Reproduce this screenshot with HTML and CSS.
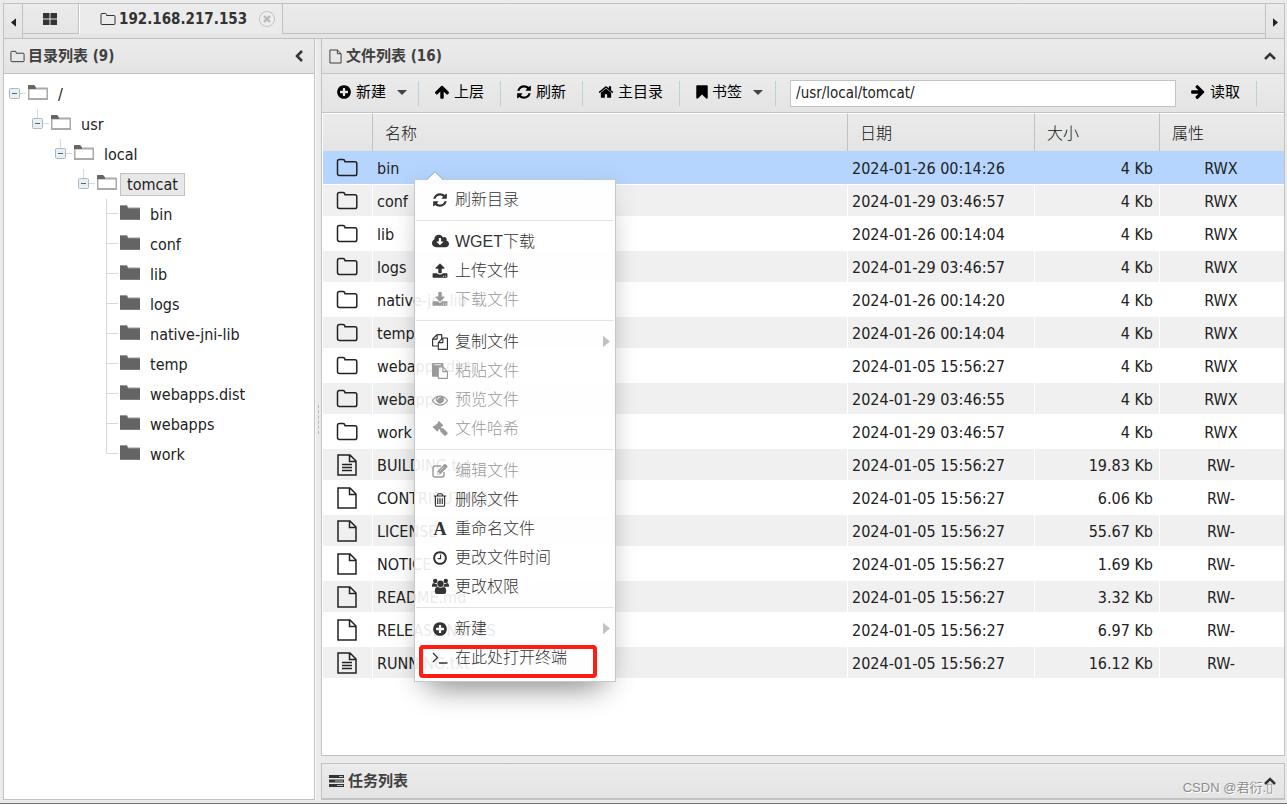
FILE: index.html
```html
<!DOCTYPE html>
<html lang="zh-CN">
<head>
<meta charset="utf-8">
<title>192.168.217.153</title>
<link rel="stylesheet" href="styles.css">
</head>
<body>
<svg class="sprite" aria-hidden="true">
  <symbol id="folder-o" viewBox="0 0 16 16"><path d="M1 3.5Q1 2.5 2 2.500H5.500Q6.500 2.500 6.500 3.500V4.500H14Q15 4.500 15 5.500V12.500Q15 13.500 14 13.500H2Q1 13.500 1 12.500Z" fill="none" stroke="currentColor"/></symbol>
  <symbol id="file-o" viewBox="0 0 14 16"><path d="M1 1H9L13 5V15H1ZM9 1V5H13" fill="none" stroke="currentColor"/></symbol>
  <symbol id="dir" viewBox="0 0 24 20"><path d="M2.500 3.500Q2.500 1.500 4.500 1.500H8Q9.800 1.500 10 3.800H20Q21.800 3.800 21.800 5.600V15.800Q21.800 17.600 20 17.600H4.500Q2.500 17.600 2.500 15.600Z" fill="none" stroke="currentColor" stroke-width="1.500"/></symbol>
  <symbol id="doc" viewBox="0 0 20 22"><path d="M1 1H13L19 7V21H1ZM12.500 1V7.500H19" fill="none" stroke="currentColor" stroke-width="1.500"/></symbol>
  <symbol id="doc-text" viewBox="0 0 20 22"><path d="M1 1H13L19 7V21H1ZM12.500 1V7.500H19M5 10.500H15M5 13.500H15M5 16.500H15" fill="none" stroke="currentColor" stroke-width="1.500"/></symbol>
  <symbol id="tree-open" viewBox="0 0 20 16"><path d="M0 1Q0 0 1 0H6L8 2.500H19Q20 2.500 20 3.500V15H0Z" fill="#aaa"/><path d="M0 1Q0 0 1 0H6L8 2.500V4H0Z" fill="#666"/><path d="M1.500 4.500H18.500V13H1.500Z" fill="#fff"/></symbol>
  <symbol id="tree-closed" viewBox="0 0 20 16"><path d="M0 0H7L8 2.500H20V15H0Z" fill="#999"/><path d="M0 1H7L8 3.500H20V14.500H0Z" fill="#646464"/></symbol>
  <symbol id="toggle" viewBox="0 0 19 30"><path d="M11 14.500H17" stroke="#d9d9d9"/><rect x=".5" y="9.500" width="10" height="10" rx="1" fill="#e9eff2" stroke="#a9bac3"/><path d="M3 14.500H8" stroke="#4d6a79"/></symbol>
  <symbol id="toggle-sub" viewBox="0 0 19 30"><path d="M5.500 0V9M11 14.500H17" stroke="#d9d9d9"/><rect x=".5" y="9.500" width="10" height="10" rx="1" fill="#e9eff2" stroke="#a9bac3"/><path d="M3 14.500H8" stroke="#4d6a79"/></symbol>
  <symbol id="branch" viewBox="0 0 19 30"><path d="M5.500 0V30M5.500 14.500H17" fill="none" stroke="#d9d9d9"/></symbol>
  <symbol id="branch-end" viewBox="0 0 19 30"><path d="M5.500 0V14.500H17" fill="none" stroke="#d9d9d9"/></symbol>
  <symbol id="grid" viewBox="0 0 14 12"><path d="M0 0H6.500V5.500H0ZM7.500 0H14V5.500H7.500ZM0 6.500H6.500V12H0ZM7.500 6.500H14V12H7.500Z"/></symbol>
  <symbol id="close" viewBox="0 0 16 16"><circle cx="8" cy="8" r="7.500" fill="#eee" stroke="#c0c0c0"/><path d="M5 5L11 11M11 5L5 11" stroke="#bdbdbd" stroke-width="2.500"/></symbol>
  <symbol id="tri-left" viewBox="0 0 6 10"><path d="M6 0V10L0 5Z"/></symbol>
  <symbol id="tri-right" viewBox="0 0 6 10"><path d="M0 0V10L6 5Z"/></symbol>
  <symbol id="caret" viewBox="0 0 10 5"><path d="M0 0H10L5 5Z"/></symbol>
  <symbol id="chev-left" viewBox="0 0 8 12"><path d="M7 1L2 6L7 11" fill="none" stroke="currentColor" stroke-width="2.500"/></symbol>
  <symbol id="chev-up" viewBox="0 0 12 8"><path d="M1 7L6 2L11 7" fill="none" stroke="currentColor" stroke-width="2.500"/></symbol>
  <symbol id="tasks" viewBox="0 0 15 12"><path d="M0 0H15V3H0ZM0 4.500H15V7.500H0ZM0 9H15V12H0Z"/><path d="M10 1H14V2H10ZM6 5.500H14V6.500H6ZM8 10H14V11H8Z" fill="#bbb"/></symbol>
  <symbol id="plus" viewBox="0 0 1792 1792"><path d="M1344 960v-128q0-26-19-45t-45-19h-256v-256q0-26-19-45t-45-19h-128q-26 0-45 19t-19 45v256h-256q-26 0-45 19t-19 45v128q0 26 19 45t45 19h256v256q0 26 19 45t45 19h128q26 0 45-19t19-45v-256h256q26 0 45-19t19-45zm320-64q0 209-103 385.5t-279.5 279.5-385.5 103-385.5-103-279.5-279.5-103-385.5 103-385.5 279.5-279.5 385.5-103 385.5 103 279.5 279.5 103 385.5z"/></symbol>
  <symbol id="refresh" viewBox="0 0 1792 1792"><path d="M1639 1056q0 5-1 7-64 268-268 434.5t-478 166.5q-146 0-282.5-55t-243.5-157l-129 129q-19 19-45 19t-45-19-19-45v-448q0-26 19-45t45-19h448q26 0 45 19t19 45-19 45l-137 137q71 66 161 102t187 36q134 0 250-65t186-179q11-17 53-117 8-23 30-23h192q13 0 22.500 9.500t9.500 22.500zm25-800v448q0 26-19 45t-45 19h-448q-26 0-45-19t-19-45 19-45l138-138q-148-137-349-137-134 0-250 65t-186 179q-11 17-53 117-8 23-30 23h-199q-13 0-22.500-9.500t-9.500-22.500v-7q65-268 270-434.500t480-166.500q146 0 284 55.500t245 156.500l130-129q19-19 45-19t45 19 19 45z"/></symbol>
  <symbol id="up" viewBox="0 0 1792 1792"><path d="M1675 971q0 51-37 90l-75 75q-38 38-91 38-54 0-90-38l-294-293v704q0 52-37.500 84.500t-90.500 32.500h-128q-53 0-90.500-32.500t-37.500-84.500v-704l-294 293q-36 38-90 38t-90-38l-75-75q-38-38-38-90 0-53 38-91l651-651q35-37 90-37 54 0 91 37l651 651q37 39 37 91z"/></symbol>
  <symbol id="right" viewBox="0 0 1792 1792"><path transform="rotate(90 896 896)" d="M1675 971q0 51-37 90l-75 75q-38 38-91 38-54 0-90-38l-294-293v704q0 52-37.500 84.500t-90.500 32.500h-128q-53 0-90.500-32.500t-37.500-84.500v-704l-294 293q-36 38-90 38t-90-38l-75-75q-38-38-38-90 0-53 38-91l651-651q35-37 90-37 54 0 91 37l651 651q37 39 37 91z"/></symbol>
  <symbol id="home" viewBox="0 0 1792 1792"><path d="M1472 992v480q0 26-19 45t-45 19h-384v-384h-256v384h-384q-26 0-45-19t-19-45v-480q0-1 .5-3t.5-3l575-474 575 474q1 2 1 6zm223-69l-62 74q-8 9-21 11h-3q-13 0-21-7l-692-577-692 577q-12 8-24 7-13-2-21-11l-62-74q-8-10-7-23.500t11-21.500l719-599q32-26 76-26t76 26l244 204v-195q0-14 9-23t23-9h192q14 0 23 9t9 23v408l219 182q10 8 11 21.500t-7 23.500z"/></symbol>
  <symbol id="bookmark" viewBox="256 0 1280 1792"><path d="M1420 128q23 0 44 9 33 13 52.500 41t19.500 62v1289q0 34-19.500 62t-52.500 41q-19 8-44 8-48 0-83-32l-441-424-441 424q-36 33-83 33-23 0-44-9-33-13-52.500-41t-19.500-62v-1289q0-34 19.500-62t52.500-41q21-9 44-9h1048z"/></symbol>
  <symbol id="cloud" viewBox="-64 0 1920 1792"><path d="M1216 928q0-14-9-23t-23-9h-224v-352q0-13-9.500-22.500t-22.500-9.500h-192q-13 0-22.500 9.500t-9.500 22.500v352h-224q-13 0-22.500 9.500t-9.500 22.500q0 14 9 23l352 352q9 9 23 9t23-9l351-351q10-12 10-24zm640 224q0 159-112.500 271.500t-271.500 112.500h-1088q-185 0-316.500-131.500t-131.500-316.500q0-130 70-240t188-165q-2-30-2-43 0-212 150-362t362-150q156 0 285.500 87t188.500 231q71-62 166-62 106 0 181 75t75 181q0 76-41 138 130 31 213.500 135.500t83.500 238.500z"/></symbol>
  <symbol id="upload" viewBox="0 0 1792 1792"><path d="M1344 1472q0-26-19-45t-45-19-45 19-19 45 19 45 45 19 45-19 19-45zm256 0q0-26-19-45t-45-19-45 19-19 45 19 45 45 19 45-19 19-45zm128-224v320q0 40-28 68t-68 28h-1472q-40 0-68-28t-28-68v-320q0-40 28-68t68-28h427q21 56 70.500 92t110.500 36h256q61 0 110.500-36t70.500-92h427q40 0 68 28t28 68zm-325-648q-17 40-59 40h-256v448q0 26-19 45t-45 19h-256q-26 0-45-19t-19-45v-448h-256q-42 0-59-40-17-39 14-69l448-448q18-19 45-19t45 19l448 448q31 30 14 69z"/></symbol>
  <symbol id="download" viewBox="0 0 1792 1792"><path d="M1344 1344q0-26-19-45t-45-19-45 19-19 45 19 45 45 19 45-19 19-45zm256 0q0-26-19-45t-45-19-45 19-19 45 19 45 45 19 45-19 19-45zm128-224v320q0 40-28 68t-68 28h-1472q-40 0-68-28t-28-68v-320q0-40 28-68t68-28h465l135 136q58 56 136 56t136-56l136-136h464q40 0 68 28t28 68zm-325-569q17 41-14 70l-448 448q-18 19-45 19t-45-19l-448-448q-31-29-14-70 17-39 59-39h256v-448q0-26 19-45t45-19h256q26 0 45 19t19 45v448h256q42 0 59 39z"/></symbol>
  <symbol id="copy" viewBox="0 0 1792 1792"><path d="M1696 384q40 0 68 28t28 68v1216q0 40-28 68t-68 28h-960q-40 0-68-28t-28-68v-288h-544q-40 0-68-28t-28-68v-672q0-40 20-88t48-76l408-408q28-28 76-48t88-20h416q40 0 68 28t28 68v328q68-40 128-40h416zm-544 213l-299 299h299v-299zm-640-384l-299 299h299v-299zm196 647l316-316v-416h-384v416q0 40-28 68t-68 28h-416v640h512v-256q0-40 20-88t48-76zm956 804v-1152h-384v416q0 40-28 68t-68 28h-416v640h896z"/></symbol>
  <symbol id="paste" viewBox="0 0 1792 1792"><path d="M768 1664h896v-640h-416q-40 0-68-28t-28-68v-416h-384v1152zm256-1440v-64q0-13-9.500-22.500t-22.500-9.500h-704q-13 0-22.500 9.500t-9.500 22.500v64q0 13 9.500 22.500t22.500 9.500h704q13 0 22.500-9.500t9.500-22.500zm256 672h299l-299-299v299zm512 128v672q0 40-28 68t-68 28h-960q-40 0-68-28t-28-68v-160h-544q-40 0-68-28t-28-68v-1344q0-40 28-68t68-28h1088q40 0 68 28t28 68v328q21 13 36 28l408 408q28 28 48 76t20 88z"/></symbol>
  <symbol id="eye" viewBox="0 0 1792 1792"><path d="M1664 960q-152-236-381-353 61 104 61 225 0 185-131.500 316.500t-316.500 131.500-316.500-131.500-131.500-316.500q0-121 61-225-229 117-381 353 133 205 333.500 326.500t434.500 121.500 434.500-121.500 333.500-326.500zm-720-384q0-20-14-34t-34-14q-125 0-214.500 89.500t-89.500 214.500q0 20 14 34t34 14 34-14 14-34q0-86 61-147t147-61q20 0 34-14t14-34zm848 384q0 34-20 69-140 230-376.500 368.500t-499.500 138.500-499.500-139-376.500-368q-20-35-20-69t20-69q140-229 376.500-368t499.500-139 499.500 139 376.500 368q20 35 20 69z"/></symbol>
  <symbol id="gavel" viewBox="0 0 16 16"><path d="M7 0L11.500 4.500L10.500 5.500L9.700 5.200L8.800 6.200L10 7.400L11 7L15.500 11.500Q16 12.500 15.200 13.200L13.900 14.500Q13 15 12.300 14.400L8 10L8.400 9L7.100 7.900L6.200 8.800L6.500 9.600L5.300 10.700L.6 6L1.700 4.800L2.500 5.100L6.100 1.700L5.800 1Z"/></symbol>
  <symbol id="edit" viewBox="0 0 16 16"><path d="M12 9V12Q12 14 10 14H3Q1 14 1 12V5Q1 3 3 3H9" fill="none" stroke="currentColor" stroke-width="1.400"/><path d="M5 8.500L12.200 1.300Q13 .6 13.800 1.300L15.200 2.700Q15.900 3.500 15.200 4.300L8 11.500H5Z"/><path d="M5.800 9V10.700H7.500ZM7.500 8.300L12 3.800" fill="#fff" stroke="#fff" stroke-width=".6"/></symbol>
  <symbol id="trash" viewBox="0 0 1792 1792"><path d="M704 736v576q0 14-9 23t-23 9h-64q-14 0-23-9t-9-23v-576q0-14 9-23t23-9h64q14 0 23 9t9 23zm256 0v576q0 14-9 23t-23 9h-64q-14 0-23-9t-9-23v-576q0-14 9-23t23-9h64q14 0 23 9t9 23zm256 0v576q0 14-9 23t-23 9h-64q-14 0-23-9t-9-23v-576q0-14 9-23t23-9h64q14 0 23 9t9 23zm128 724v-948h-896v948q0 22 7 40.500t14.500 27 10.500 8.500h832q3 0 10.500-8.500t14.500-27 7-40.500zm-672-1076h448l-48-117q-7-9-17-11h-317q-10 2-17 11zm928 32v64q0 14-9 23t-23 9h-96v948q0 83-47 143.500t-113 60.500h-832q-66 0-113-58.500t-47-141.500v-952h-96q-14 0-23-9t-9-23v-64q0-14 9-23t23-9h309l70-167q15-37 54-63t79-26h320q40 0 79 26t54 63l70 167h309q14 0 23 9t9 23z"/></symbol>
  <symbol id="clock" viewBox="0 0 1792 1792"><path d="M1024 544v448q0 14-9 23t-23 9h-320q-14 0-23-9t-9-23v-64q0-14 9-23t23-9h224v-352q0-14 9-23t23-9h64q14 0 23 9t9 23zm416 352q0-148-73-273t-198-198-273-73-273 73-198 198-73 273 73 273 198 198 273 73 273-73 198-198 73-273zm224 0q0 209-103 385.500t-279.500 279.500-385.500 103-385.500-103-279.500-279.500-103-385.500 103-385.500 279.500-279.500 385.500-103 385.500 103 279.500 279.500 103 385.500z"/></symbol>
  <symbol id="users" viewBox="0 0 17 16"><circle cx="3.200" cy="2.500" r="2.200"/><circle cx="13.800" cy="2.500" r="2.200"/><circle cx="8.500" cy="5.200" r="3.200"/><path d="M0 8Q-.2 5 1.500 4.600Q3.200 5.800 4.700 5.200Q4.600 7 5.500 8.200H1.500Q0 8.200 0 8ZM17 8Q17.200 5 15.500 4.600Q13.800 5.800 12.300 5.200Q12.400 7 11.500 8.200H15.500Q17 8.200 17 8ZM5.500 8.200Q8.500 10.500 11.500 8.200Q14.200 8.500 14.200 13Q14.200 15.500 12 15.500H5Q2.800 15.500 2.800 13Q2.800 8.500 5.500 8.200Z"/></symbol>
  <symbol id="terminal" viewBox="0 0 16 16"><path d="M1 3L5.500 7.500L1 12M7 13H15.500" fill="none" stroke="currentColor" stroke-width="1.300"/></symbol>
</svg>

<div class="window">
  <nav class="tabs">
    <button class="tab-scroll" aria-label="向左"><svg class="tri"><use href="#tri-left"/></svg></button>
    <button class="tab tab-home" aria-label="主页"><svg class="i-grid"><use href="#grid"/></svg></button>
    <div class="tab tab-active"><svg class="i16"><use href="#folder-o"/></svg><b>192.168.217.153</b><button class="tab-close" aria-label="关闭"><svg class="i16"><use href="#close"/></svg></button></div>
    <div class="tab-rest"></div>
    <button class="tab-scroll tab-next" aria-label="向右"><svg class="tri"><use href="#tri-right"/></svg></button>
  </nav>

  <div class="panes">
    <aside class="side">
      <header class="head"><svg class="i14"><use href="#folder-o"/></svg><h2>目录列表 (9)</h2><button class="fold" aria-label="折叠"><svg class="chev-l"><use href="#chev-left"/></svg></button></header>
      <ul class="tree">
        <li><div class="node"><svg class="line"><use href="#toggle"/></svg><svg class="dir"><use href="#tree-open"/></svg><span class="label">/</span></div>
          <ul>
            <li><div class="node"><svg class="line"><use href="#toggle-sub"/></svg><svg class="dir"><use href="#tree-open"/></svg><span class="label">usr</span></div>
              <ul>
                <li><div class="node"><svg class="line"><use href="#toggle-sub"/></svg><svg class="dir"><use href="#tree-open"/></svg><span class="label">local</span></div>
                  <ul>
                    <li><div class="node"><svg class="line"><use href="#toggle-sub"/></svg><svg class="dir"><use href="#tree-open"/></svg><span class="label selected">tomcat</span></div>
                      <ul>
                        <li class="node"><svg class="line"><use href="#branch"/></svg><svg class="dir"><use href="#tree-closed"/></svg><span class="label">bin</span></li>
                        <li class="node"><svg class="line"><use href="#branch"/></svg><svg class="dir"><use href="#tree-closed"/></svg><span class="label">conf</span></li>
                        <li class="node"><svg class="line"><use href="#branch"/></svg><svg class="dir"><use href="#tree-closed"/></svg><span class="label">lib</span></li>
                        <li class="node"><svg class="line"><use href="#branch"/></svg><svg class="dir"><use href="#tree-closed"/></svg><span class="label">logs</span></li>
                        <li class="node"><svg class="line"><use href="#branch"/></svg><svg class="dir"><use href="#tree-closed"/></svg><span class="label">native-jni-lib</span></li>
                        <li class="node"><svg class="line"><use href="#branch"/></svg><svg class="dir"><use href="#tree-closed"/></svg><span class="label">temp</span></li>
                        <li class="node"><svg class="line"><use href="#branch"/></svg><svg class="dir"><use href="#tree-closed"/></svg><span class="label">webapps.dist</span></li>
                        <li class="node"><svg class="line"><use href="#branch"/></svg><svg class="dir"><use href="#tree-closed"/></svg><span class="label">webapps</span></li>
                        <li class="node"><svg class="line"><use href="#branch-end"/></svg><svg class="dir"><use href="#tree-closed"/></svg><span class="label">work</span></li>
                      </ul></li>
                  </ul></li>
              </ul></li>
          </ul></li>
      </ul>
    </aside>
    <div class="splitter"><i></i></div>
    <main class="main">
      <section class="files">
        <header class="head"><svg class="i-file"><use href="#file-o"/></svg><h2>文件列表 (16)</h2><button class="fold" aria-label="折叠"><svg class="chev-u"><use href="#chev-up"/></svg></button></header>
        <div class="toolbar">
          <button class="tool drop"><svg class="i16"><use href="#plus"/></svg>新建<svg class="caret"><use href="#caret"/></svg></button>
          <button class="tool"><svg class="i16"><use href="#up"/></svg>上层</button>
          <button class="tool"><svg class="i16"><use href="#refresh"/></svg>刷新</button>
          <button class="tool"><svg class="i16"><use href="#home"/></svg>主目录</button>
          <button class="tool drop"><svg class="i-mark"><use href="#bookmark"/></svg>书签<svg class="caret"><use href="#caret"/></svg></button>
          <input class="path" type="text" aria-label="路径" value="/usr/local/tomcat/">
          <button class="tool"><svg class="i16"><use href="#right"/></svg>读取</button>
        </div>
        <table class="grid">
          <colgroup><col class="c-icon"><col><col class="c-date"><col class="c-size"><col class="c-attr"></colgroup>
          <thead><tr><th></th><th>名称</th><th>日期</th><th>大小</th><th>属性</th></tr></thead>
          <tbody>
            <tr class="current"><td><svg class="row-dir"><use href="#dir"/></svg></td><td>bin</td><td>2024-01-26 00:14:26</td><td>4 Kb</td><td>RWX</td></tr>
            <tr><td><svg class="row-dir"><use href="#dir"/></svg></td><td>conf</td><td>2024-01-29 03:46:57</td><td>4 Kb</td><td>RWX</td></tr>
            <tr><td><svg class="row-dir"><use href="#dir"/></svg></td><td>lib</td><td>2024-01-26 00:14:04</td><td>4 Kb</td><td>RWX</td></tr>
            <tr><td><svg class="row-dir"><use href="#dir"/></svg></td><td>logs</td><td>2024-01-29 03:46:57</td><td>4 Kb</td><td>RWX</td></tr>
            <tr><td><svg class="row-dir"><use href="#dir"/></svg></td><td>native-jni-lib</td><td>2024-01-26 00:14:20</td><td>4 Kb</td><td>RWX</td></tr>
            <tr><td><svg class="row-dir"><use href="#dir"/></svg></td><td>temp</td><td>2024-01-26 00:14:04</td><td>4 Kb</td><td>RWX</td></tr>
            <tr><td><svg class="row-dir"><use href="#dir"/></svg></td><td>webapps.dist</td><td>2024-01-05 15:56:27</td><td>4 Kb</td><td>RWX</td></tr>
            <tr><td><svg class="row-dir"><use href="#dir"/></svg></td><td>webapps</td><td>2024-01-29 03:46:55</td><td>4 Kb</td><td>RWX</td></tr>
            <tr><td><svg class="row-dir"><use href="#dir"/></svg></td><td>work</td><td>2024-01-29 03:46:57</td><td>4 Kb</td><td>RWX</td></tr>
            <tr><td><svg class="row-doc"><use href="#doc-text"/></svg></td><td>BUILDING.txt</td><td>2024-01-05 15:56:27</td><td>19.83 Kb</td><td>RW-</td></tr>
            <tr><td><svg class="row-doc"><use href="#doc"/></svg></td><td>CONTRIBUTING.md</td><td>2024-01-05 15:56:27</td><td>6.06 Kb</td><td>RW-</td></tr>
            <tr><td><svg class="row-doc"><use href="#doc"/></svg></td><td>LICENSE</td><td>2024-01-05 15:56:27</td><td>55.67 Kb</td><td>RW-</td></tr>
            <tr><td><svg class="row-doc"><use href="#doc"/></svg></td><td>NOTICE</td><td>2024-01-05 15:56:27</td><td>1.69 Kb</td><td>RW-</td></tr>
            <tr><td><svg class="row-doc"><use href="#doc"/></svg></td><td>README.md</td><td>2024-01-05 15:56:27</td><td>3.32 Kb</td><td>RW-</td></tr>
            <tr><td><svg class="row-doc"><use href="#doc"/></svg></td><td>RELEASE-NOTES</td><td>2024-01-05 15:56:27</td><td>6.97 Kb</td><td>RW-</td></tr>
            <tr><td><svg class="row-doc"><use href="#doc-text"/></svg></td><td>RUNNING.txt</td><td>2024-01-05 15:56:27</td><td>16.12 Kb</td><td>RW-</td></tr>
          </tbody>
        </table>
        <div class="menu">
          <svg class="menu-tip" viewBox="0 0 16 9"><path d="M0 9L8 1L16 9Z" fill="#fff"/><path d="M0 8.500L8 .7L16 8.500" fill="none" stroke="#94a9c6"/></svg>
          <button class="item"><svg class="i16"><use href="#refresh"/></svg>刷新目录</button>
          <hr>
          <button class="item"><svg class="i16 big"><use href="#cloud"/></svg>WGET下载</button>
          <button class="item"><svg class="i16"><use href="#upload"/></svg>上传文件</button>
          <button class="item" disabled><svg class="i16"><use href="#download"/></svg>下载文件</button>
          <hr>
          <button class="item"><svg class="i16"><use href="#copy"/></svg>复制文件<svg class="more"><use href="#tri-right"/></svg></button>
          <button class="item" disabled><svg class="i16"><use href="#paste"/></svg>粘贴文件</button>
          <button class="item" disabled><svg class="i16"><use href="#eye"/></svg>预览文件</button>
          <button class="item" disabled><svg class="i16"><use href="#gavel"/></svg>文件哈希</button>
          <hr>
          <button class="item" disabled><svg class="i16"><use href="#edit"/></svg>编辑文件</button>
          <button class="item"><svg class="i16"><use href="#trash"/></svg>删除文件</button>
          <button class="item"><span class="i16 letter">A</span>重命名文件</button>
          <button class="item"><svg class="i16"><use href="#clock"/></svg>更改文件时间</button>
          <button class="item"><svg class="i16 big"><use href="#users"/></svg>更改权限</button>
          <hr>
          <button class="item"><svg class="i16"><use href="#plus"/></svg>新建<svg class="more"><use href="#tri-right"/></svg></button>
          <button class="item"><svg class="i16"><use href="#terminal"/></svg>在此处打开终端</button>
          <div class="mark"></div>
        </div>
      </section>
      <section class="jobs">
        <header class="head"><svg class="i-tasks"><use href="#tasks"/></svg><h2>任务列表</h2><button class="fold" aria-label="展开"><svg class="chev-u"><use href="#chev-up"/></svg></button></header>
      </section>
    </main>
  </div>
  <div class="credit">CSDN @君衍.▯</div>
</div>
</body>
</html>
```
FILE: styles.css
```css
* { box-sizing: border-box; }
body {
  margin: 0;
  background: #ebebeb;
  color: #222;
  font: 16px/20px "DejaVu Sans Condensed", "Noto Sans CJK SC", sans-serif;
}
button { border: 0; padding: 0; margin: 0; background: none; font: inherit; color: inherit; }
ul { list-style: none; margin: 0; padding: 0; }
svg { display: block; flex: none; fill: currentColor; }
.sprite { display: none; }
.i16 { width: 16px; height: 16px; }
.i14 { width: 15px; height: 15px; }

.window {
  display: flex;
  flex-direction: column;
  height: 100vh;
  padding: 3px 2px 3px 3px;
  border-bottom: 1px solid #6e6e6e;
  position: relative;
}

.tabs {
  display: flex;
  flex: none;
  height: 36px;
  border: 1px solid #c2c2c2;
  background: linear-gradient(#ebebeb, #e4e4e4);
}
.tab-scroll {
  width: 19px;
  display: grid;
  place-items: center;
  padding-top: 3px;
  border-right: 1px solid #c2c2c2;
}
.tab-next { border-right: 0; border-left: 1px solid #c2c2c2; }
.tri { width: 5px; height: 9px; }
.tab { display: flex; align-items: center; height: 30px; border-right: 1px solid #c2c2c2; }
.tab-home { width: 56px; padding-right: 2px; justify-content: center; border-bottom: 1px solid #c2c2c2; color: #333; }
.i-grid { width: 14px; height: 12px; }
.tab-active { padding: 0 7px 0 20px; gap: 3px; border-left: 1px solid #fff; background: #ebebeb; font-size: 15px; color: #333; }
.tab-close { margin-left: 9px; }
.tab-rest { flex: 1; height: 30px; border-bottom: 1px solid #c2c2c2; }

.panes { display: flex; flex: 1; min-height: 0; }
.side {
  width: 312px;
  flex: none;
  background: #fff;
  border: 1px solid #c2c2c2;
  border-top: 0;
}
.head {
  display: flex;
  align-items: center;
  height: 35px;
  padding: 0 8px 0 7px;
  border-bottom: 1px solid #c2c2c2;
  background: linear-gradient(#ebebeb, #e4e4e4);
  color: #333;
}
.side .head { padding: 0 11px 0 6px; }
.head h2 { flex: 1; margin: 0; padding-left: 4px; font-size: 15px; line-height: 20px; font-weight: 700; color: #404040; }
.side h2 { padding-left: 3px; }
.i-file { width: 13px; height: 15px; }
.i-tasks { width: 15px; height: 12px; }
.chev-l { width: 8px; height: 12px; }
.chev-u { width: 12px; height: 8px; }

.tree { padding: 5px 0 0 5px; }
.tree ul { padding-left: 23px; }
.node { display: flex; align-items: center; height: 30px; }
.line { width: 19px; height: 30px; }
.dir { width: 20px; height: 16px; margin-right: 3px; margin-bottom: 3px; }
.label { padding: 1px 6px 0; border: 1px solid transparent; line-height: 20px; white-space: nowrap; }
.selected { background: #e8e8e8; border-color: #c2c2c2; }

.splitter { width: 6px; flex: none; display: flex; align-items: center; justify-content: center; border-left: 1px solid #f8f8f8; }
.splitter i { height: 29px; border-left: 1px dashed #bbb; }

.main { display: flex; flex: 1; flex-direction: column; gap: 7px; min-width: 0; }
.files {
  position: relative;
  flex: 1;
  min-height: 0;
  background: #fff;
  border: 1px solid #c2c2c2;
  border-top: 0;
}
.jobs { flex: none; border: 1px solid #c2c2c2; }

.toolbar {
  display: flex;
  align-items: center;
  height: 39px;
  padding-right: 27px;
  border-bottom: 1px solid #c2c2c2;
  background: linear-gradient(#ebebeb, #e4e4e4);
  color: #000;
}
.tool {
  display: flex;
  align-items: center;
  gap: 4px;
  height: 25px;
  padding: 0 16px 2px 15px;
  border-right: 1px solid #b9d3d9;
  font-size: 15px;
  line-height: 20px;
  white-space: nowrap;
  flex: none;
}
.drop { padding-right: 11px; padding-left: 14px; }
.tool ~ .drop { padding-right: 12px; padding-left: 16px; }
.i-mark { width: 12px; height: 16px; }
.caret { width: 10px; height: 5px; margin-left: 7px; color: #444; }
.path {
  flex: 1;
  min-width: 0;
  height: 27px;
  margin-left: 14px;
  padding: 0 5px;
  border: 1px solid #c2c2c2;
  background: #fff;
  font: 15px "DejaVu Sans Condensed", sans-serif;
  color: #222;
}
.path + .tool { padding-left: 14px; }

.grid { width: 100%; padding-left: 1px; table-layout: fixed; border-spacing: 0; }
.c-icon { width: 50px; }
.c-date { width: 187px; }
.c-size { width: 125px; }
.c-attr { width: 124px; }
.grid th {
  height: 38px;
  padding: 2px 12px 0;
  border-top: 1px solid #fff;
  border-right: 1px solid #c2c2c2;
  background: linear-gradient(#ebebeb, #e4e4e4);
  color: #111;
  font-weight: 300;
  text-align: left;
}
.grid td { height: 33px; padding: 2px 6px 0 4px; border-right: 1px solid #fff; white-space: nowrap; }
.grid td:first-child { padding-top: 0; }
.grid th:last-child, .grid td:last-child { border-right: 0; }
.grid td:nth-child(4) { text-align: right; }
.grid td:nth-child(5) { text-align: center; }
.grid tr:nth-child(even) td { border-top: 1px solid #fff; border-bottom: 1px solid #fff; background: #f0f0f0; }
.grid .current td { background: #b5d5ff; border-right-color: #b5d5ff; }
.row-dir, .row-doc { margin: 0 auto; color: #222; }
.row-dir { width: 24px; height: 20px; }
.row-doc { width: 20px; height: 22px; }

.menu {
  position: absolute;
  left: 92px;
  top: 140px;
  width: 202px;
  padding: 5px 0 9px;
  border: 1px solid #c4c8cc;
  background: rgba(255, 255, 255, .9);
  box-shadow: 0 22px 28px -16px rgba(0, 0, 0, .4), 0 4px 24px rgba(0, 0, 0, .1);
}
.menu-tip { position: absolute; left: 12px; top: -9px; width: 16px; height: 9px; }
.menu hr { height: 1px; margin: 6px 1px; border: 0; background: #e2e2e2; }
.item {
  display: flex;
  align-items: center;
  gap: 7px;
  width: 100%;
  height: 29px;
  padding: 0 5px 0 17px;
  font: 300 16px/20px "Liberation Sans", "Noto Sans CJK SC", sans-serif;
  color: #333;
  text-align: left;
}
.item:disabled { color: #999; }
.big { width: 17px; height: 17px; margin-right: -1px; }
.letter { font: bold 18px/16px "Liberation Serif", serif; text-align: center; }
.more { width: 7px; height: 13px; margin-left: auto; color: #c2c2c2; }
.mark { position: absolute; left: 4px; bottom: 3px; width: 178px; height: 33px; border: 4px solid #ff1c12; border-radius: 4px; pointer-events: none; }

.credit {
  position: absolute;
  right: 14px;
  bottom: 5px;
  font: 13px/20px "Liberation Sans", "Noto Sans CJK SC", sans-serif;
  color: #8c8c8c;
  text-shadow: 1px 1px 0 #fff;
}
```
